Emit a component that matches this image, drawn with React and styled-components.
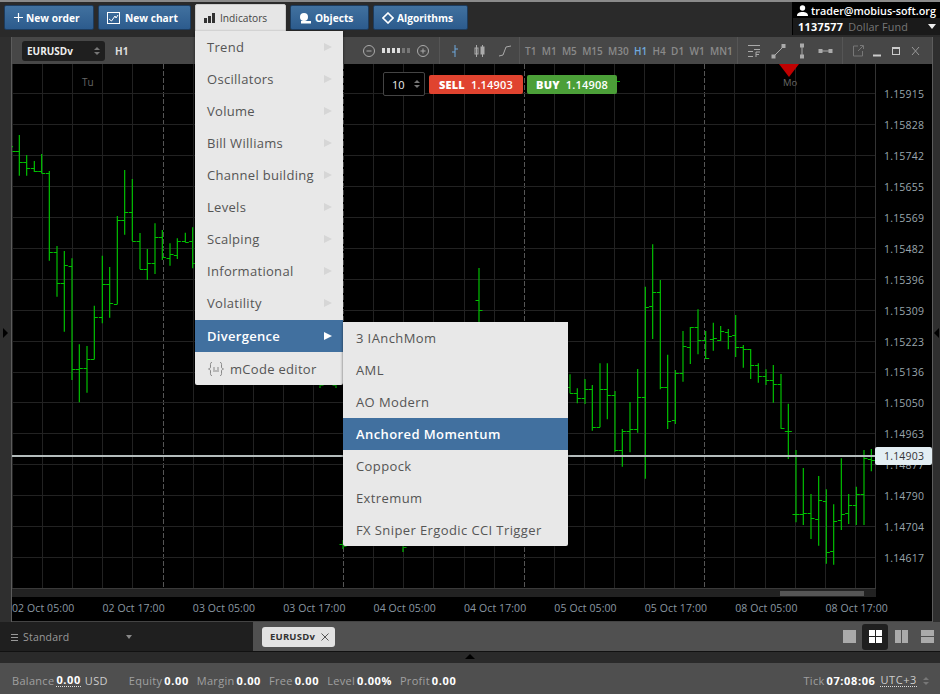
import React from "react";
import styled, { createGlobalStyle } from "styled-components";

const FONT = `"Open Sans", "DejaVu Sans", sans-serif`;

const GlobalStyle = createGlobalStyle`
  html, body { margin: 0; padding: 0; background: #2a2a2a; }
  * { box-sizing: border-box; }
  #root { width: 940px; height: 694px; overflow: hidden; }
`;

// data read off the chart: [x, high, low, open, close]
const leftBars = [
  [37, 108, 112, 108, 124], [58, 75, 197, 124, 155], [80, 135, 197, 155, 175], [103, 153, 186, 175, 182],
  [125, 132, 190, 182, 188], [148, 183, 452, 188, 427], [171, 408, 560, 427, 520], [193, 423, 665, 520, 466],
  [216, 445, 810, 468, 777], [238, 703, 877, 777, 775], [261, 708, 848, 775, 748], [283, 587, 748, 748, 622],
  [307, 437, 640, 622, 523], [329, 471, 623, 523, 580], [352, 318, 583, 582, 330], [374, 180, 374, 330, 307],
  [397, 207, 393, 307, 392], [420, 369, 478, 392, 478], [442, 417, 510, 478, 460], [465, 340, 492, 460, 381],
  [487, 360, 450, 381, 440], [510, 400, 467, 445, 432], [532, 385, 447, 435, 392], [556, 368, 397, 392, 395],
  [578, 352, 475, 392, 460],
];
const rightBars = [
  [0, 433, 490, 470, 490], [22, 475, 520, 488, 505], [45, 447, 522, 505, 478], [67, 465, 602, 478, 590],
  [90, 400, 592, 590, 478], [112, 400, 568, 478, 495], [135, 483, 665, 495, 661], [157, 597, 710, 661, 603],
  [180, 516, 667, 603, 598], [203, 417, 608, 598, 502], [226, 170, 746, 502, 230], [248, 43, 327, 228, 187],
  [271, 150, 478, 187, 470], [293, 374, 597, 470, 572], [316, 420, 582, 570, 430], [339, 303, 455, 430, 349],
  [361, 291, 402, 350, 292], [384, 238, 373, 290, 329], [407, 303, 387, 329, 385], [430, 278, 362, 328, 323],
  [452, 288, 333, 330, 303], [475, 297, 358, 306, 318], [497, 255, 381, 316, 351], [520, 345, 413, 352, 357],
  [542, 357, 447, 357, 405], [565, 400, 458, 405, 438], [588, 418, 465, 438, 451], [610, 405, 518, 451, 463],
  [633, 432, 596, 463, 595], [655, 521, 687, 603, 603], [678, 660, 877, 853, 853], [700, 714, 885, 853, 850],
  [723, 792, 927, 850, 863], [746, 738, 947, 866, 810], [769, 778, 1001, 812, 966], [791, 823, 1004, 964, 872],
  [814, 685, 900, 870, 853], [836, 792, 882, 850, 826], [859, 770, 885, 826, 792], [882, 660, 885, 792, 685],
  [904, 657, 724, 687, 690],
];
const midBars = [
  [320, 378, 388, 382, 385], [336, 378, 388, 385, 382], [343, 540, 549, 544, 546], [403, 540, 552, 545, 547],
  [479, 268, 330, 300, 310],
];

const bars = [
  ...leftBars.map(([x, h, l, o, c]) => [x / 3, 110 + h / 3, 110 + l / 3, 110 + o / 3, 110 + c / 3]),
  ...midBars,
  ...rightBars.map(([x, h, l, o, c]) => [570 + x / 3, 230 + h / 3, 230 + l / 3, 230 + o / 3, 230 + c / 3]),
];

const prices = [
  "1.15915", "1.15828", "1.15742", "1.15655", "1.15569", "1.15482", "1.15396", "1.15309",
  "1.15223", "1.15136", "1.15050", "1.14963", "1.14877", "1.14790", "1.14704", "1.14617",
];
const times = [
  "02 Oct 05:00", "02 Oct 17:00", "03 Oct 05:00", "03 Oct 17:00", "04 Oct 05:00",
  "04 Oct 17:00", "05 Oct 05:00", "05 Oct 17:00", "08 Oct 05:00", "08 Oct 17:00",
];
const frames = ["T1", "M1", "M5", "M15", "M30", "H1", "H4", "D1", "W1", "MN1"];
const indicators = [
  "Trend", "Oscillators", "Volume", "Bill Williams", "Channel building",
  "Levels", "Scalping", "Informational", "Volatility", "Divergence",
];
const divergence = ["3 IAnchMom", "AML", "AO Modern", "Anchored Momentum", "Coppock", "Extremum", "FX Sniper Ergodic CCI Trigger"];

const Page = styled.div`
  position: relative;
  width: 940px;
  height: 694px;
  display: flex;
  flex-direction: column;
  background: #2a2a2a;
  font-family: ${FONT};
  border-top: 2px solid #8a8a8a;
`;

const Toolbar = styled.div`
  height: 35px;
  display: flex;
  align-items: flex-start;
  gap: 4px;
  padding: 3px 0 0 4px;
  background: #2a2a2a;
`;

const ToolButton = styled.div`
  width: ${(p) => p.$width}px;
  height: 25px;
  display: flex;
  align-items: center;
  gap: ${(p) => p.$gap}px;
  padding-left: 8px;
  border-radius: 2px;
  font-size: 10.2px;
  font-weight: 700;
  color: #fff;
  border: 1px solid #1d3c5e;
  background: linear-gradient(#41719f, #2c5b8d);
`;

const ActiveButton = styled(ToolButton)`
  height: 28px;
  margin-top: -1px;
  font-weight: 400;
  color: #444;
  border: 1px solid #ccc;
  border-radius: 2px 2px 0 0;
  background: #e6e6e6;
`;

const Account = styled.div`
  margin: -3px 0 0 auto;
  width: 148px;
  height: 33px;
  display: flex;
  flex-direction: column;
  font-size: 10.8px;
  color: #fff;
  white-space: nowrap;
`;

const AccountUser = styled.div`
  height: 16px;
  display: flex;
  align-items: center;
  gap: 3px;
  padding-left: 5px;
  background: #000;
  font-weight: 600;
`;

const AccountFund = styled.div`
  flex: 1;
  display: flex;
  align-items: center;
  gap: 5px;
  padding: 0 4px 0 5px;
  background: #1a1a1a;
  border-left: 1px solid #000;
  font-weight: 700;
  letter-spacing: 0.3px;
  & > span { font-weight: 400; color: #777; letter-spacing: 0.1px; }
  & > i { margin-left: auto; width: 0; height: 0; border: 4px solid transparent; border-top: 5px solid #eee; border-bottom: 0; }
`;

const Main = styled.div`
  display: flex;
  height: 585px;
`;

const Gutter = styled.div`
  width: ${(p) => p.$width}px;
  display: flex;
  align-items: center;
  justify-content: center;
  background: #2f2f2f;
  padding-top: 6px;
  border-${(p) => p.$side}: 1px solid #5c5c5c;
`;

const GutterArrow = styled.i`
  width: 0;
  height: 0;
  border: 5px solid transparent;
  border-${(p) => (p.$dir === "left" ? "right" : "left")}: 5px solid #000;
  border-${(p) => p.$dir}: 0;
`;

const ChartWindow = styled.div`
  width: 920px;
  display: flex;
  flex-direction: column;
`;

const ChartHeader = styled.div`
  height: 27px;
  display: flex;
  align-items: center;
  background: #474747;
  color: #9a9a9a;
`;

const HeaderSection = styled.div`
  width: ${(p) => p.$width}px;
  height: 100%;
  display: flex;
  align-items: center;
  gap: ${(p) => p.$gap || 0}px;
  padding-left: ${(p) => p.$pad || 0}px;
  border-left: ${(p) => (p.$first ? "0" : "1px solid #555")};
`;

const SymbolSelect = styled.div`
  width: 83px;
  height: 20px;
  display: flex;
  align-items: center;
  justify-content: space-between;
  padding: 0 5px;
  border-radius: 3px;
  background: #1f1f1f;
  color: #eee;
  font-size: 10px;
  font-weight: 700;
`;

const Spin = styled.span`
  display: flex;
  flex-direction: column;
  gap: 2px;
  &::before, &::after { content: ""; width: 0; height: 0; border: 3px solid transparent; }
  &::before { border-bottom: 3px solid #777; border-top: 0; }
  &::after { border-top: 3px solid #777; border-bottom: 0; }
`;

const UtcSpin = styled(Spin)`
  margin-left: 6px;
`;

const HeaderLabel = styled.span`
  margin: 0 0 0 10px;
  font-size: 10px;
  font-weight: 700;
  color: #ddd;
`;

const ZoomGroup = styled.div`
  margin: 0 9px 0 auto;
  display: flex;
  align-items: center;
  gap: 6px;
`;

const ZoomDots = styled.div`
  display: flex;
  gap: 2px;
`;

const ZoomDot = styled.i`
  width: 3px;
  height: 5px;
  background: ${(p) => (p.$on ? "#ddd" : "#777")};
`;

const Frame = styled.span`
  font-size: 10px;
  font-weight: 600;
  color: ${(p) => (p.$active ? "#6fa8dc" : "#8a8a8a")};
`;

const ChartBody = styled.div`
  position: relative;
  height: 524px;
  display: flex;
  background: #000;
`;

const Plot = styled.svg`
  width: 863px;
  height: 524px;
  display: block;
  flex: none;
  font-family: ${FONT};
`;

const PriceScale = styled.div`
  flex: 1;
  padding-top: 15px;
  border-left: 1px solid #333;
`;

const PriceRow = styled.div`
  height: 30.9px;
  display: flex;
  align-items: center;
  padding-left: 8px;
  font-size: 10.5px;
  letter-spacing: 0.2px;
  color: #9aa6ad;
`;

const CurrentPrice = styled.div`
  position: absolute;
  top: 383px;
  left: 863px;
  width: 57px;
  height: 18px;
  display: flex;
  align-items: center;
  padding-left: 9px;
  border-radius: 2px;
  background: #e3eef3;
  color: #333;
  font-size: 10.5px;
  letter-spacing: 0.2px;
`;

const OrderPanel = styled.div`
  position: absolute;
  top: 8px;
  left: 371px;
  display: flex;
  align-items: center;
  gap: 4px;
`;

const QtyBox = styled.div`
  width: 42px;
  height: 24px;
  display: flex;
  align-items: center;
  justify-content: space-between;
  padding: 0 4px 0 8px;
  background: #000;
  border: 1px solid #444;
  border-radius: 2px;
  color: #eee;
  font-size: 11px;
`;

const TradeButton = styled.div`
  width: ${(p) => p.$width}px;
  height: 19px;
  display: flex;
  align-items: center;
  justify-content: center;
  gap: 6px;
  border-radius: 2px;
  background: ${(p) => p.$color};
  color: #fff;
  font-size: 11px;
  font-weight: 600;
  letter-spacing: 0.2px;
  & > b { font-weight: 800; }
`;

const ScrollStrip = styled.div`
  height: 9px;
  display: flex;
  justify-content: flex-end;
  padding: 2px 12px 0 0;
  background: #222;
  border-top: 1px solid #3a3a3a;
  width: 864px;
  & > i { width: 84px; height: 5px; background: #555; }
`;

const ScrollRow = styled.div`
  display: flex;
  background: #000;
`;

const TimeAxis = styled.div`
  height: 25px;
  display: flex;
  align-items: center;
  padding-bottom: 2px;
  background: #000;
  border-bottom: 1px solid #444;
`;

const TimeLabel = styled.span`
  width: 90.4px;
  flex: none;
  font-size: 10.5px;
  letter-spacing: 0.1px;
  color: #8b99a3;
`;

const TabRow = styled.div`
  height: 30px;
  display: flex;
  border-bottom: 1px solid #111;
`;

const LayoutPicker = styled.div`
  width: 253px;
  display: flex;
  align-items: center;
  padding: 1px 0 0 11px;
  background: #1f1f1f;
  color: #9a9a9a;
  font-size: 10.5px;
  letter-spacing: 0.2px;
  & > span { margin-left: 5px; }
  & > i {
    margin-left: 57px;
    width: 0; height: 0;
    border: 3px solid transparent; border-top: 4px solid #888; border-bottom: 0;
  }
`;

const TabArea = styled.div`
  flex: 1;
  display: flex;
  align-items: center;
  padding-left: 9px;
  background: #505050;
`;

const TabChip = styled.div`
  width: 73px;
  height: 20px;
  display: flex;
  align-items: center;
  gap: 6px;
  padding-left: 8px;
  border-radius: 3px;
  background: #e2e2e2;
  color: #333;
  font-size: 9.5px;
  font-weight: 700;
  letter-spacing: 0.2px;
`;

const LayoutIcons = styled.div`
  margin-left: auto;
  display: flex;
  align-items: center;
`;

const LayoutButton = styled.div`
  width: 26px;
  height: 26px;
  display: flex;
  align-items: center;
  justify-content: center;
  border-radius: 3px;
  background: ${(p) => (p.$active ? "#1f1f1f" : "transparent")};
`;

const Strip = styled.div`
  height: 11px;
  display: flex;
  justify-content: center;
  background: #2a2a2a;
  & > i {
    margin-top: 2px;
    width: 0; height: 0;
    border: 5px solid transparent; border-bottom: 5px solid #000; border-top: 0;
  }
`;

const StatusBar = styled.div`
  flex: 1;
  display: flex;
  align-items: center;
  padding: 4px 11px 0 12px;
  background: #4f4f4f;
  font-size: 11px;
  color: #a0a0a0;
`;

const StatusItem = styled.span`
  display: flex;
  align-items: center;
  gap: 2px;
  margin-right: ${(p) => p.$gap}px;
  margin-left: ${(p) => (p.$push ? "auto" : "0")};
  letter-spacing: 0.3px;
  & > b { color: #fff; font-weight: 700; letter-spacing: 0.6px; }
`;

const UsdLabel = styled(StatusItem)`
  color: #ccc;
`;

const Dotted = styled.span`
  color: ${(p) => (p.$light ? "#ccc" : "#fff")};
  font-weight: ${(p) => (p.$light ? 400 : 700)};
  letter-spacing: 0.6px;
  border-bottom: 1px dotted #ddd;
  line-height: 12px;
`;

const Menu = styled.div`
  position: absolute;
  top: ${(p) => p.$top}px;
  left: ${(p) => p.$left}px;
  width: ${(p) => p.$width}px;
  background: #e8e8e8;
  border-radius: 0 0 2px 2px;
  box-shadow: 0 1px 3px rgba(0, 0, 0, 0.6);
  font-size: 13px;
  letter-spacing: ${(p) => p.$spacing}px;
  color: #555;
`;

const MenuItem = styled.div`
  height: 32px;
  display: flex;
  align-items: center;
  justify-content: space-between;
  padding: 0 11px 0 ${(p) => p.$pad || 12}px;
  background: ${(p) => (p.$active ? "#41709f" : "transparent")};
  color: ${(p) => (p.$active ? "#fff" : "#555")};
  font-weight: ${(p) => (p.$active ? 600 : 400)};
`;

const DivergenceItem = styled(MenuItem)`
  margin-top: 1px;
`;

const MenuArrow = styled.i`
  width: 0;
  height: 0;
  border: 4px solid transparent;
  border-left: 8px solid ${(p) => (p.$active ? "#fff" : "#d6d6d6")};
  border-right: 0;
`;

const EditorItem = styled(MenuItem)`
  height: 33px;
  justify-content: flex-start;
  gap: 5px;
`;

const GRID_V = Array.from({ length: 29 }, (_, i) => 12 + i * 30.1);
const GRID_H = Array.from({ length: 16 }, (_, i) => 93.4 + i * 30.9);
const snap = (v) => Math.round(v) + 0.5;

const Chart = () => (
  <Plot viewBox="12 64 863 524">
    {GRID_V.map((x, i) => (
      <line
        key={x}
        x1={snap(x)}
        x2={snap(x)}
        y1="64"
        y2="588"
        stroke={i % 6 === 5 ? "#555" : "#222"}
        strokeDasharray={i % 6 === 5 ? "5 2" : undefined}
      />
    ))}
    {GRID_H.map((y) => (
      <line key={y} x1="12" x2="875" y1={snap(y)} y2={snap(y)} stroke="#222" />
    ))}
    {bars.map(([x, h, l, o, c]) => (
      <g key={x} stroke="#00c000" strokeWidth="1.2">
        <line x1={x} x2={x} y1={h} y2={l} />
        <line x1={x - 3.5} x2={x} y1={snap(o)} y2={snap(o)} strokeWidth="1" />
        <line x1={x} x2={x + 3.5} y1={snap(c)} y2={snap(c)} strokeWidth="1" />
      </g>
    ))}
    <line x1="617" x2="620" y1="81.500" y2="81.500" stroke="#00b000" />
    <line x1="12" x2="875" y1="456" y2="456" stroke="#b4bcbc" strokeWidth="2" />
    <text x="82" y="86" fontSize="10" fill="#666">Tu</text>
    <polygon points="779,64 799,64 789,77" fill="#c00000" />
    <text x="783" y="86" fontSize="9.500" fill="#666">Mo</text>
  </Plot>
);

const HeaderIcon = ({ children, w = 14 }) => (
  <svg width={w} height="16" viewBox={`0 0 ${w} 16`} fill="none" stroke="#aaa" strokeWidth="1">
    {children}
  </svg>
);

const App = () => (
  <>
    <GlobalStyle />
    <Page>
      <Toolbar>
        <ToolButton $width={90} $gap={2}>
          <svg width="11" height="11" viewBox="0 0 11 11" stroke="#fff" strokeWidth="1.2"><path d="M5.500 1v9M1 5.500h9" /></svg>
          New order
        </ToolButton>
        <ToolButton $width={93} $gap={5}>
          <svg width="13" height="12" viewBox="0 0 13 12" fill="none" stroke="#fff"><rect x=".5" y=".5" width="12" height="11" /><path d="M2 7l2.500 2L8 4l1 2 2-3" /></svg>
          New chart
        </ToolButton>
        <ActiveButton $width={91} $gap={5}>
          <svg width="11" height="10" viewBox="0 0 11 10" fill="#333"><rect y="5" width="3" height="5" /><rect x="4" y="3" width="3" height="7" /><rect x="8" width="3" height="10" /></svg>
          Indicators
        </ActiveButton>
        <ToolButton $width={79} $gap={4}>
          <svg width="12" height="12" viewBox="0 0 12 12" fill="#fff"><circle cx="5" cy="5" r="4" /><rect x="2" y="9" width="10" height="2.500" /></svg>
          Objects
        </ToolButton>
        <ToolButton $width={95} $gap={3}>
          <svg width="12" height="12" viewBox="0 0 12 12" fill="none" stroke="#fff" strokeWidth="1.6"><path d="M6 1l5 5-5 5-5-5z" /></svg>
          Algorithms
        </ToolButton>
        <Account>
          <AccountUser>
            <svg width="11" height="11" viewBox="0 0 11 11" fill="#fff"><circle cx="5.500" cy="3" r="2.700" /><path d="M0 11c0-3 2-4 5.500-4s5.500 1 5.500 4z" /></svg>
            trader@mobius-soft.org
          </AccountUser>
          <AccountFund>
            1137577 <span>Dollar Fund</span><i />
          </AccountFund>
        </Account>
      </Toolbar>
      <Main>
        <Gutter $width={12} $side="right"><GutterArrow $dir="right" /></Gutter>
        <ChartWindow>
          <ChartHeader>
            <HeaderSection $width={427} $first $pad={10}>
              <SymbolSelect>EURUSDv<Spin /></SymbolSelect>
              <HeaderLabel>H1</HeaderLabel>
              <ZoomGroup>
                <HeaderIcon w={14}><circle cx="7" cy="8" r="5.500" /><path d="M4.500 8h5" /></HeaderIcon>
                <ZoomDots>
                  {[1, 1, 1, 1, 0, 0].map((on, i) => <ZoomDot key={i} $on={on} />)}
                </ZoomDots>
                <HeaderIcon w={14}><circle cx="7" cy="8" r="5.500" /><path d="M4.500 8h5M7 5.500v5" /></HeaderIcon>
              </ZoomGroup>
            </HeaderSection>
            <HeaderSection $width={80} $pad={8} $gap={11}>
              <HeaderIcon w={14}><path d="M7 2v12M4 9h3M7 6h3" stroke="#6fa8dc" /></HeaderIcon>
              <HeaderIcon w={14}><rect x="2" y="5" width="3" height="6" /><rect x="8" y="4" width="3" height="7" fill="#aaa" /><path d="M3.500 2v12M9.500 2v12" /></HeaderIcon>
              <HeaderIcon w={14}><path d="M1 13l4-1 3-8 5-1" /></HeaderIcon>
            </HeaderSection>
            <HeaderSection $width={218} $pad={5} $gap={5.3}>
              {frames.map((f) => <Frame key={f} $active={f === "H1"}>{f}</Frame>)}
            </HeaderSection>
            <HeaderSection $width={105} $pad={9} $gap={9}>
              <HeaderIcon w={15}><path d="M1 2.500h12M7 6.500h6M1 8.500h5M1 13.500h5" /><path d="M9 14V9h4M9 11.500h3" /></HeaderIcon>
              <HeaderIcon w={15}><path d="M2 14L13 3" /><rect x="1" y="12" width="3" height="3" fill="#aaa" /><rect x="11" y="1.500" width="3" height="3" fill="#aaa" /></HeaderIcon>
              <HeaderIcon w={14}><path d="M7 3v10" /><rect x="5.500" y="1" width="3" height="3" fill="#aaa" /><rect x="5.500" y="12" width="3" height="3" fill="#aaa" /></HeaderIcon>
              <HeaderIcon w={15}><path d="M2 8h11" /><rect x="1" y="6.500" width="3" height="3" fill="#aaa" /><rect x="11" y="6.500" width="3" height="3" fill="#aaa" /></HeaderIcon>
            </HeaderSection>
            <HeaderSection $width={90} $pad={9} $gap={8}>
              <HeaderIcon w={12}><path d="M6 3H1.500v10h9V8M6 8l5-5M8 2.500h3.500V6" stroke="#777" /></HeaderIcon>
              <HeaderIcon w={11}><path d="M1 12.500h8" strokeWidth="2" stroke="#ccc" /></HeaderIcon>
              <HeaderIcon w={11}><rect x="1.500" y="4.500" width="7" height="7" stroke="#ccc" /><path d="M1 5h8" strokeWidth="2" stroke="#ccc" /></HeaderIcon>
              <HeaderIcon w={11}><path d="M2 4l7 8M9 4l-7 8" stroke="#999" /></HeaderIcon>
            </HeaderSection>
          </ChartHeader>
          <ChartBody>
            <Chart />
            <PriceScale>
              {prices.map((p) => <PriceRow key={p}>{p}</PriceRow>)}
            </PriceScale>
            <CurrentPrice>1.14903</CurrentPrice>
            <OrderPanel>
              <QtyBox>10<Spin /></QtyBox>
              <TradeButton $width={94} $color="#e0432f"><b>SELL</b> 1.14903</TradeButton>
              <TradeButton $width={90} $color="#4b9f38"><b>BUY</b> 1.14908</TradeButton>
            </OrderPanel>
          </ChartBody>
          <ScrollRow><ScrollStrip><i /></ScrollStrip></ScrollRow>
          <TimeAxis>
            {times.map((t) => <TimeLabel key={t}>{t}</TimeLabel>)}
          </TimeAxis>
        </ChartWindow>
        <Gutter $width={8} $side="left"><GutterArrow $dir="left" /></Gutter>
      </Main>
      <TabRow>
        <LayoutPicker>
          <svg width="7" height="7" viewBox="0 0 7 7" stroke="#999"><path d="M0 .5h7M0 3.500h7M0 6.500h7" /></svg>
          <span>Standard</span>
          <i />
        </LayoutPicker>
        <TabArea>
          <TabChip>
            EURUSDv
            <svg width="8" height="8" viewBox="0 0 8 8" stroke="#555"><path d="M.5.500l7 7M7.500.500l-7 7" /></svg>
          </TabChip>
          <LayoutIcons>
            <LayoutButton><svg width="13" height="13"><rect width="13" height="13" fill="#aaa" /></svg></LayoutButton>
            <LayoutButton $active><svg width="13" height="13" fill="#fff"><rect width="6" height="6" /><rect x="7" width="6" height="6" /><rect y="7" width="6" height="6" /><rect x="7" y="7" width="6" height="6" /></svg></LayoutButton>
            <LayoutButton><svg width="13" height="13" fill="#aaa"><rect width="6" height="13" /><rect x="7" width="6" height="13" /></svg></LayoutButton>
            <LayoutButton><svg width="13" height="13" fill="#aaa"><rect width="13" height="6" /><rect y="7" width="13" height="6" /></svg></LayoutButton>
          </LayoutIcons>
        </TabArea>
      </TabRow>
      <Strip><i /></Strip>
      <StatusBar>
        <StatusItem $gap={4}>Balance <Dotted>0.00</Dotted></StatusItem>
        <UsdLabel $gap={21}>USD</UsdLabel>
        <StatusItem $gap={8}>Equity <b>0.00</b></StatusItem>
        <StatusItem $gap={8}>Margin <b>0.00</b></StatusItem>
        <StatusItem $gap={8}>Free <b>0.00</b></StatusItem>
        <StatusItem $gap={8}>Level <b>0.00%</b></StatusItem>
        <StatusItem $gap={0}>Profit <b>0.00</b></StatusItem>
        <StatusItem $gap={5} $push>Tick <b>07:08:06</b></StatusItem>
        <Dotted $light>UTC+3</Dotted>
        <UtcSpin />
      </StatusBar>

      <Menu $top={29} $left={195} $width={148} $spacing={0.3}>
        {indicators.map((name) =>
          name === "Divergence" ? (
            <DivergenceItem key={name} $active>
              {name}
              <MenuArrow $active />
            </DivergenceItem>
          ) : (
            <MenuItem key={name}>
              {name}
              <MenuArrow />
            </MenuItem>
          )
        )}
        <EditorItem>
          <svg width="18" height="16" viewBox="0 0 18 16" fill="none" stroke="#888"><path d="M5 1.500C3 1.500 3.500 3 3.500 5S3.500 7.500 1.500 8C3.500 8.500 3.500 9 3.500 11S3 14.500 5 14.500M13 1.500C15 1.500 14.500 3 14.500 5S14.500 7.500 16.500 8C14.500 8.500 14.500 9 14.500 11S15 14.500 13 14.500M7 6v5M9 9v2M11 6v5" /></svg>
          mCode editor
        </EditorItem>
      </Menu>
      <Menu $top={320} $left={343} $width={225} $spacing={0.4}>
        {divergence.map((name) => (
          <MenuItem key={name} $pad={13} $active={name === "Anchored Momentum"}>{name}</MenuItem>
        ))}
      </Menu>
    </Page>
  </>
);

export default App;
